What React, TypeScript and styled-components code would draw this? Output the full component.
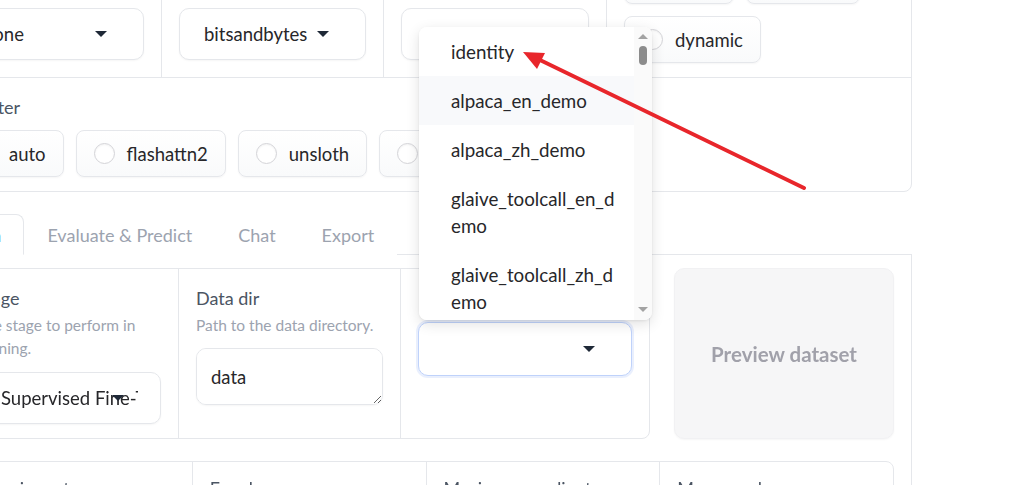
import React from 'react';
import styled, { createGlobalStyle } from 'styled-components';

const GlobalStyle = createGlobalStyle`
    html, body {
        margin: 0;
        padding: 0;
        background: #ffffff;
    }
    body {
        font-family: Lato, 'Liberation Sans', sans-serif;
        color: #27272a;
    }
    * {
        box-sizing: border-box;
    }
`;

const Viewport = styled.div`
    position: relative;
    width: 1024px;
    height: 485px;
    overflow: hidden;
    background: #fff;
`;

const Page = styled.div`
    width: 972px;
    margin: -96px 0 0 -60px;
    display: flex;
    flex-direction: column;
`;

const Panel = styled.div`
    border: 1px solid #e5e7eb;
    border-radius: 8px;
    background: #fff;
`;

const PanelRow = styled.div<{ $divider?: boolean }>`
    display: flex;
    border-top: ${(p) => (p.$divider ? '1px solid #e5e7eb' : 'none')};
`;

const Cell = styled.div<{
    $width?: number;
    $padTop?: number;
    $padBottom?: number;
    $toBottom?: boolean;
}>`
    flex: ${(p) => (p.$width ? `0 0 ${p.$width}px` : '1 1 0')};
    min-width: 0;
    display: flex;
    flex-direction: column;
    justify-content: ${(p) => (p.$toBottom ? 'space-between' : 'flex-start')};
    padding: ${(p) => p.$padTop ?? 17}px 17px ${(p) => p.$padBottom ?? 17}px;
    border-right: 1px solid #e5e7eb;

    &:last-child {
        border-right: none;
    }
`;

const Label = styled.div`
    font-size: 18px;
    line-height: 24px;
    color: #4b5563;
    white-space: nowrap;
`;

const Info = styled.div`
    margin-top: 4px;
    font-size: 15.5px;
    line-height: 23px;
    color: #9ca3af;
`;

const SelectBox = styled.div<{ $focused?: boolean }>`
    position: relative;
    height: ${(p) => (p.$focused ? 54 : 52)}px;
    margin-top: 12px;
    display: flex;
    align-items: center;
    padding: 0 22px 0 24px;
    border: 1px solid ${(p) => (p.$focused ? '#bfd2fa' : '#e5e7eb')};
    border-radius: 10px;
    background: #fff;
    box-shadow: ${(p) =>
        p.$focused
            ? '0 0 0 2px rgba(191, 210, 250, 0.35)'
            : '0 1px 2px rgba(0, 0, 0, 0.04)'};
`;

const SelectValue = styled.span`
    flex: 1;
    overflow: hidden;
    white-space: nowrap;
    font-size: 18.5px;
    color: #27272a;
`;

const Caret = styled.span`
    position: absolute;
    right: 36px;
    top: 50%;
    margin-top: -3px;
    border-left: 6px solid transparent;
    border-right: 6px solid transparent;
    border-top: 6px solid #1f2937;
`;

const RadioGroup = styled.div`
    display: flex;
    flex-wrap: wrap;
    gap: 12px;
    margin-top: 11px;
`;

const RadioItem = styled.label`
    height: 47px;
    display: flex;
    align-items: center;
    gap: 12px;
    padding: 0 17px;
    border: 1px solid #e5e7eb;
    border-radius: 8px;
    background: linear-gradient(#ffffff, #f9fafb);
    box-shadow: 0 1px 2px rgba(0, 0, 0, 0.04);
    font-size: 18.5px;
    color: #27272a;
    white-space: nowrap;
`;

const RadioDot = styled.span`
    width: 21px;
    height: 21px;
    border-radius: 50%;
    border: 1px solid #d4d4d8;
    background: #fff;
    box-shadow: inset 0 1px 2px rgba(0, 0, 0, 0.05);
`;

const TabBar = styled.div`
    display: flex;
    margin-top: 22px;
    height: 41px;
    border-bottom: 1px solid #e5e7eb;
`;

const Tab = styled.button<{ $active?: boolean }>`
    height: 41px;
    margin-bottom: -1px;
    padding: 1px 22px 0;
    font-family: inherit;
    font-size: 18px;
    background: #fff;
    border: 1px solid ${(p) => (p.$active ? '#e5e7eb' : 'transparent')};
    border-bottom-color: ${(p) => (p.$active ? '#fff' : 'transparent')};
    border-radius: 8px 8px 0 0;
    color: ${(p) => (p.$active ? '#3b82f6' : '#9ca3af')};
`;

const TabPanel = styled.div`
    display: flex;
    flex-direction: column;
    gap: 22px;
    padding: 13px 17px 17px;
    border: 1px solid #e5e7eb;
    border-top: none;
`;

const FormRow = styled.div`
    display: flex;
    gap: 24px;
`;

const Group = styled.div`
    flex: 1;
    display: flex;
    border: 1px solid #e5e7eb;
    border-radius: 8px;
    background: #fff;
`;

const TextArea = styled.textarea`
    margin-top: 11px;
    height: 57px;
    padding: 16px 14px;
    font-family: inherit;
    font-size: 18.5px;
    line-height: 24px;
    color: #27272a;
    border: 1px solid #e5e7eb;
    border-radius: 10px;
    box-shadow: 0 1px 2px rgba(0, 0, 0, 0.04);
    resize: vertical;
    outline: none;
`;

const PreviewButton = styled.button`
    flex: 0 0 220px;
    border: 1px solid #f1f1f3;
    border-radius: 10px;
    background: #f6f6f7;
    box-shadow: 0 1px 2px rgba(0, 0, 0, 0.04);
    font-family: inherit;
    font-size: 20.5px;
    font-weight: 700;
    color: #a1a1aa;
`;

const Popup = styled.div`
    position: absolute;
    left: 419px;
    top: 27px;
    width: 233px;
    height: 293px;
    display: flex;
    overflow: hidden;
    background: #fff;
    border-radius: 8px;
    box-shadow: 0 4px 14px rgba(0, 0, 0, 0.12), 0 1px 3px rgba(0, 0, 0, 0.08);
`;

const OptionList = styled.ul`
    flex: 1;
    margin: 0;
    padding: 0;
    list-style: none;
`;

const Option = styled.li<{ $hover?: boolean }>`
    padding: 11px 18px 11px 32px;
    font-size: 18.75px;
    line-height: 27px;
    color: #27272a;
    word-break: break-all;
    background: ${(p) => (p.$hover ? '#f8f9fb' : '#fff')};
`;

const ScrollTrack = styled.div`
    flex: 0 0 18px;
    display: flex;
    flex-direction: column;
    align-items: center;
    padding: 7px 0 8px;
    background: #fafafa;
`;

const ScrollArrow = styled.span<{ $down?: boolean }>`
    border-left: 5px solid transparent;
    border-right: 5px solid transparent;
    ${(p) => (p.$down ? 'border-top: 5px solid #a3a3a3;' : 'border-bottom: 5px solid #a3a3a3;')}
    ${(p) => (p.$down ? 'margin-top: auto;' : '')}
`;

const ScrollThumb = styled.span`
    width: 8px;
    height: 19px;
    margin-top: 7px;
    border-radius: 4px;
    background: #8c8c8c;
`;

const ArrowLayer = styled.svg`
    position: absolute;
    left: 0;
    top: 0;
    width: 1024px;
    height: 485px;
    pointer-events: none;
`;

const Dropdown: React.FC<{ value?: string; focused?: boolean }> = ({ value, focused }) => (
    <SelectBox $focused={focused}>
        <SelectValue>{value}</SelectValue>
        <Caret />
    </SelectBox>
);

const Radios: React.FC<{ options: string[] }> = ({ options }) => (
    <RadioGroup>
        {options.map((o) => (
            <RadioItem key={o}>
                <RadioDot />
                {o}
            </RadioItem>
        ))}
    </RadioGroup>
);

const datasets = [
    'identity',
    'alpaca_en_demo',
    'alpaca_zh_demo',
    'glaive_toolcall_en_demo',
    'glaive_toolcall_zh_demo',
    'mllm_demo',
];

const trainArgs = [
    { label: 'Learning rate', info: 'Initial learning rate for AdamW.' },
    { label: 'Epochs', info: 'Total number of training epochs.' },
    { label: 'Maximum gradient norm', info: 'Norm for gradient clipping.' },
    { label: 'Max samples', info: 'Maximum samples per dataset.' },
];

const App: React.FC = () => {
    return (
        <Viewport>
            <GlobalStyle />
            <Page>
                <Panel>
                    <PanelRow>
                        <Cell $width={221} $toBottom>
                            <div>
                                <Label>Quantization bit</Label>
                                <Info>Enable quantization.</Info>
                            </div>
                            <Dropdown value="none" />
                        </Cell>
                        <Cell $width={222} $toBottom>
                            <div>
                                <Label>Quantization method</Label>
                                <Info>Quantization algorithm.</Info>
                            </div>
                            <Dropdown value="bitsandbytes" />
                        </Cell>
                        <Cell $width={223} $toBottom>
                            <div>
                                <Label>Prompt template</Label>
                                <Info>Chat template.</Info>
                            </div>
                            <Dropdown value="default" />
                        </Cell>
                        <Cell $padBottom={14}>
                            <Label>RoPE scaling</Label>
                            <Radios options={['none', 'linear', 'dynamic']} />
                        </Cell>
                    </PanelRow>
                    <PanelRow $divider>
                        <Cell $padBottom={14}>
                            <Label>Booster</Label>
                            <Radios options={['auto', 'flashattn2', 'unsloth', 'liger_kernel']} />
                        </Cell>
                    </PanelRow>
                </Panel>

                <TabBar>
                    <Tab $active>Train</Tab>
                    <Tab>Evaluate &amp; Predict</Tab>
                    <Tab>Chat</Tab>
                    <Tab>Export</Tab>
                </TabBar>

                <TabPanel>
                    <FormRow>
                        <Group>
                            <Cell $width={220} $padBottom={14}>
                                <Label>Stage</Label>
                                <Info>The stage to perform in training.</Info>
                                <Dropdown value="Supervised Fine-Tuning" />
                            </Cell>
                            <Cell $width={222} $padBottom={14}>
                                <Label>Data dir</Label>
                                <Info>Path to the data directory.</Info>
                                <TextArea defaultValue="data" />
                            </Cell>
                            <Cell $padBottom={14}>
                                <Label>Dataset</Label>
                                <Dropdown focused />
                            </Cell>
                        </Group>
                        <PreviewButton>Preview dataset</PreviewButton>
                    </FormRow>
                    <FormRow>
                        <Group>
                            {trainArgs.map((a) => (
                                <Cell key={a.label} $padTop={14}>
                                    <Label>{a.label}</Label>
                                    <Info>{a.info}</Info>
                                </Cell>
                            ))}
                        </Group>
                    </FormRow>
                </TabPanel>
            </Page>

            <Popup>
                <OptionList>
                    {datasets.map((d) => (
                        <Option key={d} $hover={d === 'alpaca_en_demo'}>
                            {d}
                        </Option>
                    ))}
                </OptionList>
                <ScrollTrack>
                    <ScrollArrow />
                    <ScrollThumb />
                    <ScrollArrow $down />
                </ScrollTrack>
            </Popup>

            <ArrowLayer viewBox="0 0 1024 485">
                <line
                    x1="804"
                    y1="188"
                    x2="540"
                    y2="60"
                    stroke="#e8262b"
                    strokeWidth="4"
                    strokeLinecap="round"
                />
                <polygon points="523,52 545,53 537,69" fill="#e8262b" />
            </ArrowLayer>
        </Viewport>
    );
};

export default App;
